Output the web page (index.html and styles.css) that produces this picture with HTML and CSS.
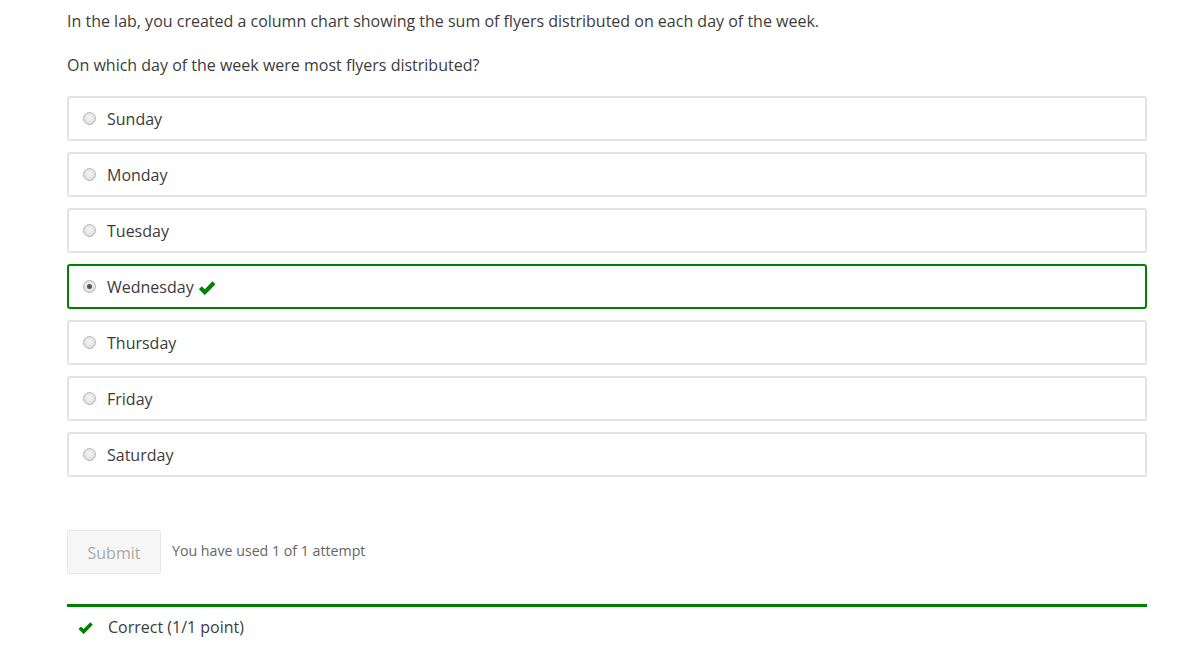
FILE: index.html
```html
<!DOCTYPE html>
<html>
<head>
<meta charset="utf-8">
<link rel="stylesheet" href="styles.css">
</head>
<body>
<div class="problem">
  <p class="q">In the lab, you created a column chart showing the sum of flyers distributed on each day of the week.</p>
  <p class="q last">On which day of the week were most flyers distributed?</p>
  <div class="choices">
    <label class="choice"><span class="radio"></span><span>Sunday</span></label>
    <label class="choice"><span class="radio"></span><span>Monday</span></label>
    <label class="choice"><span class="radio"></span><span>Tuesday</span></label>
    <label class="choice correct"><span class="radio checked"></span><span>Wednesday</span>
      <svg class="check" viewBox="0 0 16 14" width="18" height="15"><path d="M1.8 7.2 L6 11.4 L14.5 2.6" fill="none" stroke="#008100" stroke-width="3.8"/></svg>
    </label>
    <label class="choice"><span class="radio"></span><span>Thursday</span></label>
    <label class="choice"><span class="radio"></span><span>Friday</span></label>
    <label class="choice"><span class="radio"></span><span>Saturday</span></label>
  </div>
  <div class="actions">
    <button class="submit">Submit</button>
    <span class="attempts">You have used 1 of 1 attempt</span>
  </div>
  <div class="result">
    <svg class="rcheck" viewBox="0 0 16 14" width="15" height="13"><path d="M1.8 7.2 L6 11.4 L14.5 2.6" fill="none" stroke="#008100" stroke-width="3.8"/></svg>
    <span>Correct (1/1 point)</span>
  </div>
</div>
</body>
</html>
```
FILE: styles.css
```css
html, body {
  margin: 0;
  padding: 0;
  background: #fff;
}
body {
  font-family: "Open Sans", "Liberation Sans", sans-serif;
  color: #3c3c3c;
}
.problem {
  width: 1080px;
  margin-left: 67px;
  padding-top: 9px;
}
.q {
  margin: 0 0 20px 0;
  font-size: 16px;
  line-height: 24px;
}
.q.last {
  margin-bottom: 19px;
}
.choices {
  display: flex;
  flex-direction: column;
  gap: 11px;
  margin-top: 0;
}
.choice {
  box-sizing: border-box;
  height: 45px;
  border: 2px solid #e3e3e3;
  border-radius: 3px;
  display: flex;
  align-items: center;
  padding-left: 14px;
  font-size: 16px;
  color: #3c3c3c;
}
.choice.correct {
  border-color: #008100;
}
.radio {
  box-sizing: border-box;
  width: 13px;
  height: 13px;
  border-radius: 50%;
  border: 1px solid #b5b5b5;
  background: radial-gradient(circle at 50% 40%, #f4f4f4, #d8d8d8);
  margin-right: 11px;
  display: inline-block;
  position: relative;
}
.radio.checked::after {
  content: "";
  position: absolute;
  left: 3px;
  top: 3px;
  width: 5px;
  height: 5px;
  border-radius: 50%;
  background: #555;
}
.check {
  margin-left: 4px;
  margin-top: 1px;
}
.actions {
  display: flex;
  align-items: center;
  margin-top: 53px;
}
.submit {
  box-sizing: border-box;
  width: 94px;
  height: 44px;
  background: #f6f6f6;
  border: 1px solid #e6e6e6;
  border-radius: 2px;
  color: #aaa;
  font-family: "Open Sans", "Liberation Sans", sans-serif;
  font-size: 16px;
  padding: 0;
  padding-top: 2px;
}
.attempts {
  margin-left: 11px;
  font-size: 14.2px;
  color: #666;
  margin-top: -4px;
}
.result {
  margin-top: 30px;
  border-top: 3px solid #008100;
  display: flex;
  align-items: center;
  height: 40px;
  padding-left: 11px;
  font-size: 16px;
  color: #3c3c3c;
}
.rcheck {
  margin-right: 15px;
}
```
